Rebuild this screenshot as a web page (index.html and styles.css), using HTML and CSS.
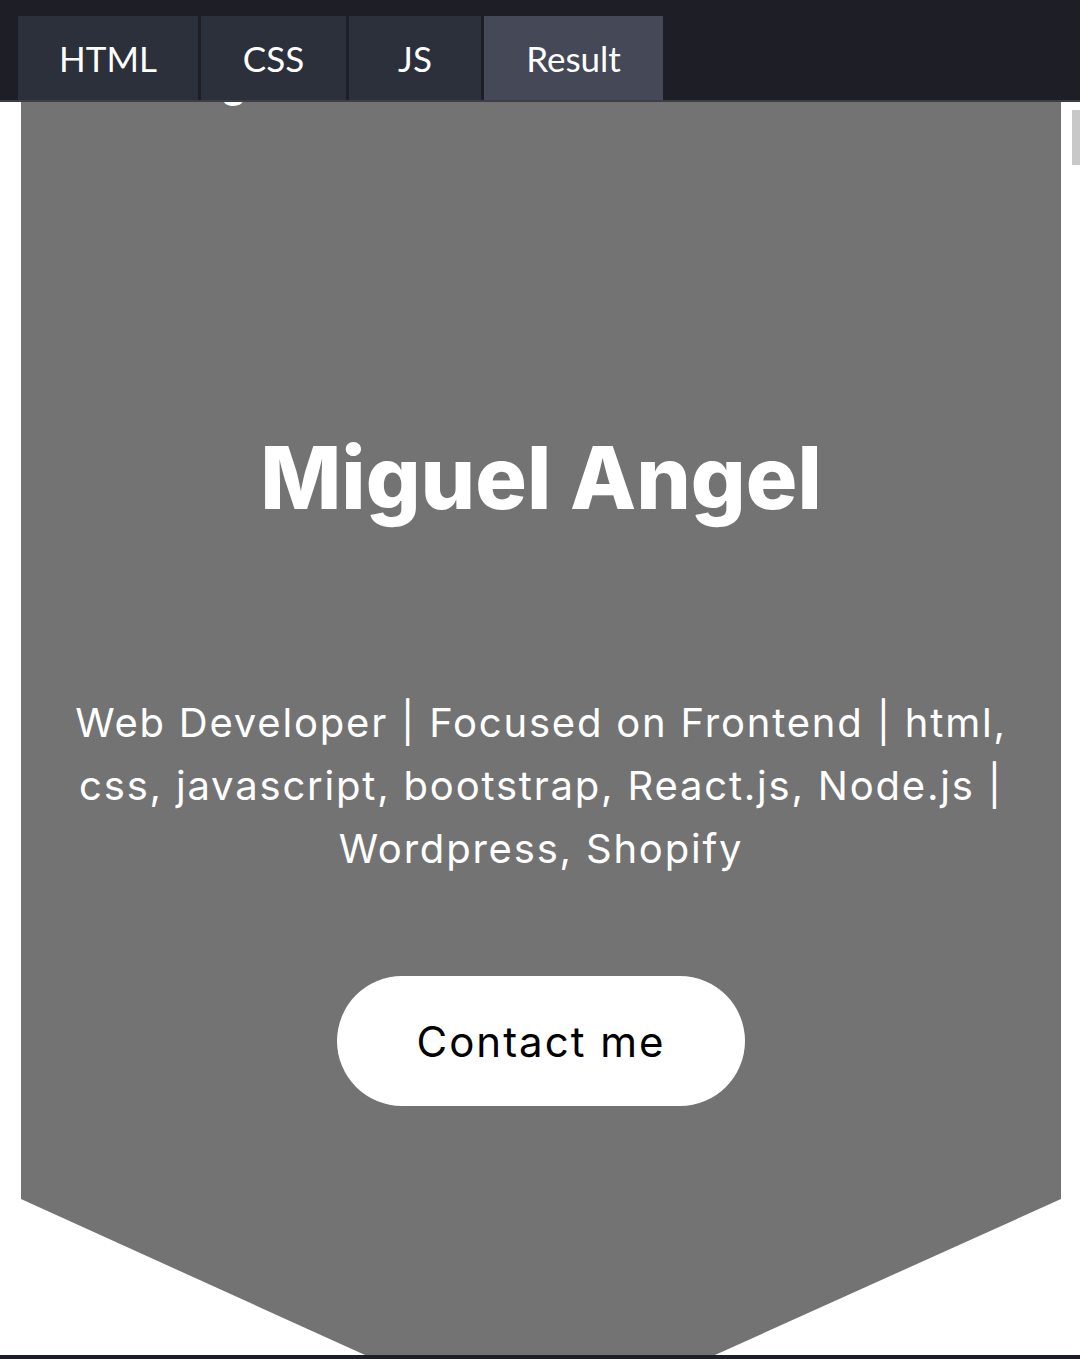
FILE: index.html
```html
<!DOCTYPE html>
<html lang="en">
<head>
<meta charset="utf-8">
<title>Miguel Angel</title>
<link rel="stylesheet" href="styles.css">
</head>
<body>
<header class="tabbar">
  <nav class="tabs">
    <span class="tab tab-html">HTML</span>
    <span class="tab tab-css">CSS</span>
    <span class="tab tab-js">JS</span>
    <span class="tab tab-result active">Result</span>
  </nav>
</header>
<main class="page">
  <section class="hero">
    <div class="brand">Miguel</div>
    <h1 class="name">Miguel Angel</h1>
    <p class="bio">Web Developer | Focused on Frontend | html,<br>css, javascript, bootstrap, React.js, Node.js |<br>Wordpress, Shopify</p>
    <a class="contact" href="#">Contact me</a>
  </section>
</main>
<div class="scrollthumb"></div>
<div class="bottombar"></div>
</body>
</html>
```

FILE: styles.css
```css
* { box-sizing: border-box; }
html, body { margin: 0; padding: 0; }
body {
  background: #ffffff;
  width: 1080px;
  height: 1359px;
  overflow: hidden;
  font-family: "Inter", "Open Sans", sans-serif;
}
.tabbar {
  position: fixed;
  top: 0; left: 0; right: 0;
  height: 102px;
  background: #1e1f26;
  border-bottom: 2px solid #3d3f47;
  z-index: 10;
  padding: 16px 0 0 18px;
}
.tabs { display: flex; gap: 3px; height: 84px; }
.tab {
  display: flex;
  align-items: center;
  justify-content: center;
  background: #2c303b;
  color: #ffffff;
  font-family: "Lato", sans-serif;
  font-size: 35px;
  height: 84px;
}
.tab-html { width: 180px; }
.tab-css { width: 145px; }
.tab-js { width: 132px; }
.tab-result { width: 179px; }
.tab.active { background: #444857; }
.page {
  padding: 102px 19px 0 21px;
}
.hero {
  width: 1040px;
  height: 1253px;
  background: #737373;
  clip-path: polygon(0 0, 100% 0, 100% 1097px, 694px 100%, 344px 100%, 0 1097px);
  display: flex;
  flex-direction: column;
  align-items: center;
  color: #ffffff;
}
.brand {
  align-self: flex-start;
  margin: -46px 0 0 152px;
  height: 54px;
  line-height: 54px;
  font-size: 40px;
  font-weight: 700;
}
.name {
  margin: 308px 0 0;
  font-size: 86px;
  font-weight: 800;
  line-height: 120px;
  letter-spacing: 0;
}
.bio {
  margin: 153px 0 0;
  font-size: 40px;
  font-weight: 400;
  line-height: 63px;
  letter-spacing: 1.8px;
  text-align: center;
}
.contact {
  margin-top: 96px;
  width: 408px;
  height: 130px;
  border-radius: 65px;
  background: #ffffff;
  color: #000000;
  font-size: 42px;
  letter-spacing: 2px;
  text-decoration: none;
  display: flex;
  align-items: center;
  justify-content: center;
}
.scrollthumb {
  position: fixed;
  top: 110px;
  right: 0;
  width: 8px;
  height: 55px;
  background: #c8c8c8;
}
.bottombar {
  position: fixed;
  left: 0; right: 0; bottom: 0;
  height: 4px;
  background: #1e1f26;
}
```
